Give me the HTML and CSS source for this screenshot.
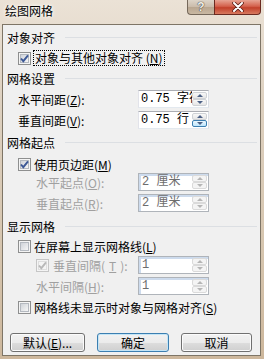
FILE: index.html
```html
<!DOCTYPE html>
<html lang="zh-CN">

<head>
    <meta charset="UTF-8">
    <title>绘图网格</title>
    <link rel="stylesheet" href="styles.css">
</head>

<body>
    <div class="titlebar">
        <span class="title">绘图网格</span>
        <div class="caption">
            <span class="cap-help">?</span>
            <span class="cap-close">
                <svg width="14" height="10" viewBox="0 0 14 10">
                    <path d="M3 1 L11 9 M11 1 L3 9" stroke="#5a1f16" stroke-width="3.6" stroke-linecap="round" />
                    <path d="M3 1 L11 9 M11 1 L3 9" stroke="#fff" stroke-width="2" stroke-linecap="round" />
                </svg>
            </span>
        </div>
    </div>

    <div class="client">
        <div class="head h1">对象对齐</div>
        <div class="check-row c1">
            <span class="box"><svg class="tick" viewBox="0 0 13 13"><path d="M3 6.5 L5.3 9.2 L10 3.4" /></svg></span>
            <span class="focus">对象与其他对象对齐 (<u>N</u>)</span>
        </div>

        <div class="head h2">网格设置</div>
        <div class="field f1">
            <span class="lbl">水平间距(<u>Z</u>):</span>
            <div class="spin">
                <span class="spin-val">0.75 字符</span>
                <span class="spin-btns"><span class="arr up"></span><span class="arr down"></span></span>
            </div>
        </div>
        <div class="field">
            <span class="lbl">垂直间距(<u>V</u>):</span>
            <div class="spin">
                <span class="spin-val">0.75 行</span>
                <span class="spin-btns"><span class="arr up"></span><span class="arr down hot"></span></span>
            </div>
        </div>

        <div class="head h3">网格起点</div>
        <div class="check-row c2">
            <span class="box"><svg class="tick" viewBox="0 0 13 13"><path d="M3 6.5 L5.3 9.2 L10 3.4" /></svg></span>
            <span>使用页边距(<u>M</u>)</span>
        </div>
        <div class="field f1 off">
            <span class="lbl indent">水平起点(<u>O</u>):</span>
            <div class="spin">
                <span class="spin-val">2 厘米</span>
                <span class="spin-btns"><span class="arr up"></span><span class="arr down"></span></span>
            </div>
        </div>
        <div class="field off">
            <span class="lbl indent">垂直起点(<u>R</u>):</span>
            <div class="spin">
                <span class="spin-val">2 厘米</span>
                <span class="spin-btns"><span class="arr up"></span><span class="arr down"></span></span>
            </div>
        </div>

        <div class="head h4">显示网格</div>
        <div class="check-row c3">
            <span class="box"></span>
            <span>在屏幕上显示网格线(<u>L</u>)</span>
        </div>
        <div class="field off">
            <span class="lbl indent check-lbl">
                <span class="box"><svg class="tick" viewBox="0 0 13 13"><path d="M3 6.5 L5.3 9.2 L10 3.4" /></svg></span>
                垂直间隔(<u>T</u>):
            </span>
            <div class="spin">
                <span class="spin-val">1</span>
                <span class="spin-btns"><span class="arr up"></span><span class="arr down"></span></span>
            </div>
        </div>
        <div class="field off">
            <span class="lbl indent">水平间隔(<u>H</u>):</span>
            <div class="spin">
                <span class="spin-val">1</span>
                <span class="spin-btns"><span class="arr up"></span><span class="arr down"></span></span>
            </div>
        </div>
        <div class="check-row c4">
            <span class="box"></span>
            <span>网格线未显示时对象与网格对齐(<u>S</u>)</span>
        </div>

        <div class="buttons">
            <span class="btn b-default">默认(<u>E</u>)...</span>
            <span class="btn b-ok">确定</span>
            <span class="btn b-cancel">取消</span>
        </div>
    </div>
</body>

</html>
```

FILE: styles.css
```css
* {
    box-sizing: border-box;
}

body {
    margin: 0;
    width: 264px;
    height: 359px;
    overflow: hidden;
    font-family: "Noto Sans CJK SC", "Liberation Sans", sans-serif;
    font-size: 12px;
    color: #000;
    background: linear-gradient(180deg, #ebe2d6 0%, #ddd0bf 30%, #d6c5ae 70%, #cdb79c 100%);
}

u {
    text-decoration: underline;
    text-underline-offset: 1px;
}

/* title bar */

.titlebar {
    height: 24px;
    display: flex;
    justify-content: space-between;
    align-items: flex-start;
}

.title {
    padding: 3px 0 0 5px;
    line-height: 15px;
    text-shadow: 0 0 5px #fff, 0 0 3px #fff;
}

.caption {
    display: flex;
    margin-right: 3px;
}

.cap-help {
    width: 27px;
    height: 15px;
    border: 1px solid #75685a;
    border-top: none;
    border-right: none;
    border-radius: 0 0 0 4px;
    background: linear-gradient(#ddd4c8, #cabba9 50%, #b8a690 51%, #c9b8a2);
    color: #f4f0ea;
    font-family: "Liberation Sans", sans-serif;
    font-weight: bold;
    font-size: 12px;
    line-height: 14px;
    text-align: center;
    text-shadow: 0 0 1px #333, 0 0 1px #333;
}

.cap-close {
    width: 47px;
    height: 15px;
    border: 1px solid #6b2a20;
    border-top: none;
    border-radius: 0 0 4px 0;
    background: linear-gradient(#e7a493, #d4614c 45%, #c2402a 55%, #d77a5f);
    display: flex;
    justify-content: center;
    align-items: center;
}

/* client area */

.client {
    margin-left: 2px;
    width: 259px;
    height: 332px;
    border: 1px solid #7e7566;
    background: #f0f0f0;
    padding: 0 3px 0 4px;
    display: flex;
    flex-direction: column;
}

.head {
    display: flex;
    align-items: center;
    flex-shrink: 0;
}

.head::after {
    content: "";
    flex: 1;
    height: 1px;
    margin-left: 10px;
    background: #dcdfe3;
}

.h1 {
    height: 24px;
}

.h2 {
    height: 22px;
}

.h3 {
    height: 27px;
}

.h4 {
    height: 28px;
}

.check-row {
    display: flex;
    align-items: center;
    gap: 3px;
    padding-left: 11px;
    flex-shrink: 0;
}

.c1 {
    height: 18px;
}

.c2 {
    height: 16px;
}

.c3 {
    height: 13px;
}

.c4 {
    height: 17px;
    margin-top: 4px;
}

.focus {
    outline: 1px dotted #000;
    outline-offset: 0;
    padding: 0 1px;
    line-height: 14px;
}

.box {
    position: relative;
    width: 13px;
    height: 13px;
    flex-shrink: 0;
    border: 1px solid #8e8f8f;
    background: #f4f4f4;
}

.box::before {
    content: "";
    position: absolute;
    inset: 1px;
    border: 1px solid #b4b9c0;
    background: linear-gradient(135deg, #cfd3d9, #f6f6f6);
}

.tick {
    position: absolute;
    left: -1px;
    top: -1px;
    width: 13px;
    height: 13px;
}

.tick path {
    fill: none;
    stroke: #3c5896;
    stroke-width: 1.9;
}

/* spin fields */

.field {
    display: flex;
    align-items: center;
    height: 18px;
    margin-top: 3px;
    flex-shrink: 0;
}

.f1 {
    margin-top: 1px;
}

.lbl {
    flex: 1;
    padding-left: 11px;
}

.lbl.indent {
    padding-left: 29px;
}

.check-lbl {
    display: flex;
    align-items: center;
    gap: 4px;
}

.spin {
    width: 71px;
    height: 18px;
    margin-right: 48px;
    display: flex;
    border: 1px solid #abadb3;
    border-color: #abadb3 #dbdfe6 #e3e9ef #e2e3ea;
    background: #fff;
}

.spin-val {
    flex: 1;
    overflow: hidden;
    white-space: nowrap;
    padding-left: 2px;
    line-height: 16px;
    font-family: "Liberation Mono", "Noto Sans CJK SC", monospace;
}

.spin-btns {
    width: 16px;
    display: flex;
    flex-direction: column;
    padding: 1px 1px 1px 0;
}

.arr {
    flex: 1;
    display: flex;
    justify-content: center;
    align-items: center;
    border: 1px solid #cfd2d6;
    border-radius: 2px;
    background: linear-gradient(#f8f8f8, #e6e6e6);
}

.arr::after {
    content: "";
    border-left: 3px solid transparent;
    border-right: 3px solid transparent;
}

.arr.up::after {
    border-bottom: 3px solid #4d6185;
}

.arr.down::after {
    border-top: 3px solid #4d6185;
}

.arr.hot {
    border-color: #3c7fb1;
    background: linear-gradient(#eaf6fd, #bee6fd);
}

.off .lbl {
    color: #a0a0a0;
}

.off .spin {
    border-color: #afb4ba;
    box-shadow: inset 2px 2px 0 #cddbed;
}

.off .spin-val {
    color: #6d6d6d;
    padding-left: 3px;
}

.off .arr::after {
    border-top-color: #b5b5b5;
    border-bottom-color: #b5b5b5;
}

.off .arr {
    border-color: #dadada;
    background: #f4f4f4;
}

.off .box {
    border-color: #c6c6c6;
}

.off .box::before {
    border-color: #dedede;
    background: #f4f4f4;
}

.off .tick path {
    stroke: #b8b8b8;
}

/* buttons */

.buttons {
    display: flex;
    margin-top: 17px;
    padding-left: 3px;
    gap: 12px;
}

.btn {
    height: 19px;
    display: flex;
    justify-content: center;
    align-items: center;
    border: 1px solid #707070;
    border-radius: 3px;
    background: linear-gradient(#f2f2f2 0%, #ebebeb 50%, #dddddd 51%, #cfcfcf 100%);
    box-shadow: inset 0 0 0 1px #fbfbfb;
}

.b-default {
    width: 75px;
}

.b-ok {
    width: 72px;
    border-color: #3c7fb1;
    box-shadow: inset 0 0 0 1px #c4e5f6;
}

.b-cancel {
    width: 71px;
}
```
